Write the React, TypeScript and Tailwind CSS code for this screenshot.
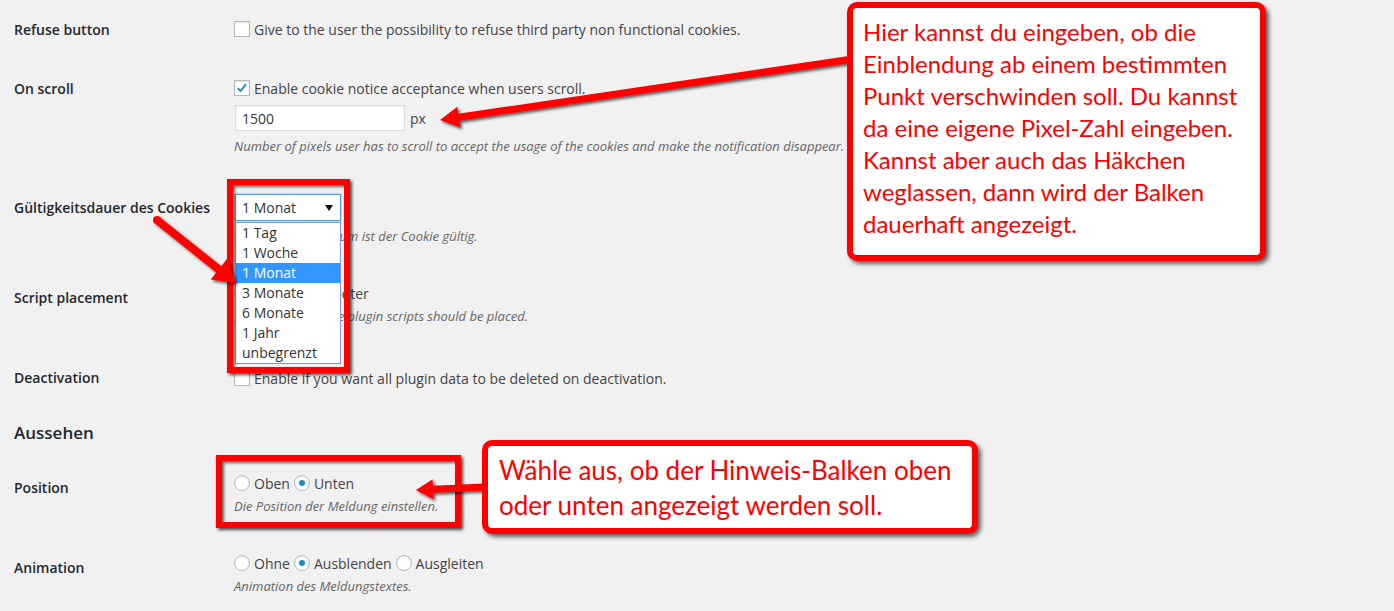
import type { ReactNode } from 'react';

const Checkbox = ({ checked }: { checked?: boolean }) => (
  <span className="mr-1 inline-flex h-4 w-4 shrink-0 items-center justify-center border border-[#b4b9be] bg-white shadow-[inset_0_1px_2px_rgba(0,0,0,0.1)]">
    {checked && (
      <svg viewBox="0 0 16 16" className="h-4 w-4">
        <path d="M3.2 8.2l3 3.3 6.4-8" fill="none" stroke="#1e8cbe" strokeWidth="2.2" />
      </svg>
    )}
  </span>
);

const Radio = ({ checked, label }: { checked?: boolean; label: string }) => (
  <span className="mr-1 inline-flex items-center">
    <span className="mr-1 inline-flex h-4 w-4 shrink-0 items-center justify-center rounded-full border border-[#b4b9be] bg-white shadow-[inset_0_1px_2px_rgba(0,0,0,0.1)]">
      {checked && <span className="h-[6px] w-[6px] rounded-full bg-[#1e8cbe]" />}
    </span>
    {label}
  </span>
);

const Desc = ({ children, className = '' }: { children: ReactNode; className?: string }) => (
  <p className={`text-[13px] italic leading-[18px] text-[#666] whitespace-nowrap ${className}`}>{children}</p>
);

const Row = ({
  label,
  className,
  fieldClass,
  children,
}: {
  label: string;
  className: string;
  fieldClass: string;
  children: ReactNode;
}) => (
  <div className={`flex ${className}`}>
    <div className="w-[220px] shrink-0 pt-[20px] text-[14px] font-semibold leading-[19px] text-[#23282d]">{label}</div>
    <div className={`flex-1 text-[14px] text-[#444] ${fieldClass}`}>{children}</div>
  </div>
);

// polygon for a straight arrow, start -> tip
const arrow = (x1: number, y1: number, x2: number, y2: number, w: number, hl: number, hw: number) => {
  const len = Math.hypot(x2 - x1, y2 - y1);
  const ux = (x2 - x1) / len;
  const uy = (y2 - y1) / len;
  const px = -uy;
  const py = ux;
  const bx = x2 - ux * hl;
  const by = y2 - uy * hl;
  const pts = [
    [x1 + (px * w) / 2, y1 + (py * w) / 2],
    [bx + (px * w) / 2, by + (py * w) / 2],
    [bx + (px * hw) / 2, by + (py * hw) / 2],
    [x2, y2],
    [bx - (px * hw) / 2, by - (py * hw) / 2],
    [bx - (px * w) / 2, by - (py * w) / 2],
    [x1 - (px * w) / 2, y1 - (py * w) / 2],
  ];
  return pts.map((p) => p.map((n) => n.toFixed(1)).join(',')).join(' ');
};

const arrows = [
  { x1: 846, y1: 60, x2: 440, y2: 120, w: 7, hl: 19, hw: 21 },
  { x1: 157, y1: 220, x2: 236, y2: 283, w: 8, hl: 22, hw: 26 },
  { x1: 486, y1: 487, x2: 416, y2: 490, w: 7, hl: 17, hw: 20 },
];

const options = ['1 Tag', '1 Woche', '1 Monat', '3 Monate', '6 Monate', '1 Jahr', 'unbegrenzt'];

export default function App() {
  return (
    <div className="relative h-[611px] w-[1394px] overflow-hidden bg-[#f1f1f1] font-['Open_Sans','Liberation_Sans',sans-serif]">
      <div className="pl-[14px]">
        <Row label="Refuse button" className="h-[59px]" fieldClass="pt-[19px]">
          <div className="flex h-[20px] items-center whitespace-nowrap">
            <Checkbox />
            Give to the user the possibility to refuse third party non functional cookies.
          </div>
        </Row>

        <Row label="On scroll" className="h-[119px]" fieldClass="pt-[19px]">
          <div className="flex h-[20px] items-center whitespace-nowrap">
            <Checkbox checked />
            Enable cookie notice acceptance when users scroll.
          </div>
          <div className="mt-[7px] flex items-center">
            <div className="ml-[1px] flex h-[26px] w-[170px] items-center border border-[#ddd] bg-white pl-[6px] text-[#32373c] shadow-[inset_0_1px_2px_rgba(0,0,0,0.07)]">
              1500
            </div>
            <span className="ml-[5px]">px</span>
          </div>
          <Desc className="mt-[6px]">
            Number of pixels user has to scroll to accept the usage of the cookies and make the notification disappear.
          </Desc>
        </Row>

        <Row label="Gültigkeitsdauer des Cookies" className="h-[90px]" fieldClass="pt-[16px]">
          <div className="relative z-10 ml-[1px] w-[106px]">
            <div className="flex h-[27px] items-center justify-between border border-[#5b9dd9] bg-white pl-[6px] pr-[7px] text-[#32373c] shadow-[0_0_2px_rgba(30,140,190,0.6)]">
              1 Monat
              <svg viewBox="0 0 8 6" className="h-[6px] w-[8px]">
                <path d="M0 0h8L4 6z" fill="#111" />
              </svg>
            </div>
            <ul className="absolute left-0 top-full mt-[1px] w-[106px] border border-[#7a9cd3] bg-white text-[#333]">
              {options.map((o) => (
                <li
                  key={o}
                  className={`h-[20px] pl-[6px] leading-[20px] ${o === '1 Monat' ? 'bg-[#3297fd] text-white' : ''}`}
                >
                  {o}
                </li>
              ))}
            </ul>
          </div>
          <Desc className="mt-[6px]">Für welchen Zeitraum ist der Cookie gültig.</Desc>
        </Row>

        <Row label="Script placement" className="h-[80px]" fieldClass="pt-[15px]">
          <div className="flex h-[20px] items-center whitespace-nowrap">
            <Radio checked label="Header" />
            <Radio label="Footer" />
          </div>
          <Desc className="mt-[4px]">Select where all the plugin scripts should be placed.</Desc>
        </Row>

        <Row label="Deactivation" className="h-[73px]" fieldClass="pt-[20px]">
          <div className="flex h-[20px] items-center whitespace-nowrap">
            <Checkbox />
            Enable if you want all plugin data to be deleted on deactivation.
          </div>
        </Row>

        <h2 className="h-[37px] text-[17px] font-semibold leading-[24px] text-[#23282d]">Aussehen</h2>

        <Row label="Position" className="h-[80px]" fieldClass="pt-[15px]">
          <div className="flex h-[20px] items-center whitespace-nowrap">
            <Radio label="Oben" />
            <Radio checked label="Unten" />
          </div>
          <Desc className="mt-[4px]">Die Position der Meldung einstellen.</Desc>
        </Row>

        <Row label="Animation" className="h-[73px]" fieldClass="pt-[15px]">
          <div className="flex h-[20px] items-center whitespace-nowrap">
            <Radio label="Ohne" />
            <Radio checked label="Ausblenden" />
            <Radio label="Ausgleiten" />
          </div>
          <Desc className="mt-[4px]">Animation des Meldungstextes.</Desc>
        </Row>
      </div>

      {/* annotation frames */}
      <div className="absolute left-[227px] top-[179px] z-20 h-[194px] w-[123px] border-[6px] border-[#ff0000] shadow-[2px_2px_3px_rgba(0,0,0,0.7),inset_2px_2px_3px_rgba(0,0,0,0.6)]" />
      <div className="absolute left-[216px] top-[455px] z-20 h-[73px] w-[245px] border-[6px] border-[#ff0000] shadow-[2px_2px_3px_rgba(0,0,0,0.7),inset_2px_2px_3px_rgba(0,0,0,0.6)]" />

      <svg className="pointer-events-none absolute left-0 top-0 z-30" width="1394" height="611">
        <defs>
          <filter id="shadow" x="-10%" y="-10%" width="120%" height="130%">
            <feDropShadow dx="2" dy="2" stdDeviation="1.5" floodColor="#000" floodOpacity="0.65" />
          </filter>
        </defs>
        {arrows.map((a, i) => (
          <g key={i} filter="url(#shadow)" fill="#ff0000">
            <polygon points={arrow(a.x1, a.y1, a.x2, a.y2, a.w, a.hl, a.hw)} />
            <circle cx={a.x1} cy={a.y1} r={a.w / 2} />
          </g>
        ))}
      </svg>

      {/* callouts */}
      <div className="absolute left-[847px] top-[2px] z-40 h-[259px] w-[419px] rounded-[10px] border-[6px] border-[#ff0000] bg-white pl-[10px] pt-[8px] font-['Lato','Liberation_Sans',sans-serif] text-[24px] leading-[32px] whitespace-nowrap text-[#ff0000] shadow-[3px_3px_4px_rgba(0,0,0,0.6)]">
        Hier kannst du eingeben, ob die
        <br />
        Einblendung ab einem bestimmten
        <br />
        Punkt verschwinden soll. Du kannst
        <br />
        da eine eigene Pixel-Zahl eingeben.
        <br />
        Kannst aber auch das Häkchen
        <br />
        weglassen, dann wird der Balken
        <br />
        dauerhaft angezeigt.
      </div>

      <div className="absolute left-[482px] top-[440px] z-40 h-[94px] w-[496px] rounded-[10px] border-[6px] border-[#ff0000] bg-white pl-[11px] pt-[7px] font-['Lato','Liberation_Sans',sans-serif] text-[26px] leading-[35px] whitespace-nowrap text-[#ff0000] shadow-[3px_3px_4px_rgba(0,0,0,0.6)]">
        Wähle aus, ob der Hinweis-Balken oben
        <br />
        oder unten angezeigt werden soll.
      </div>
    </div>
  );
}
